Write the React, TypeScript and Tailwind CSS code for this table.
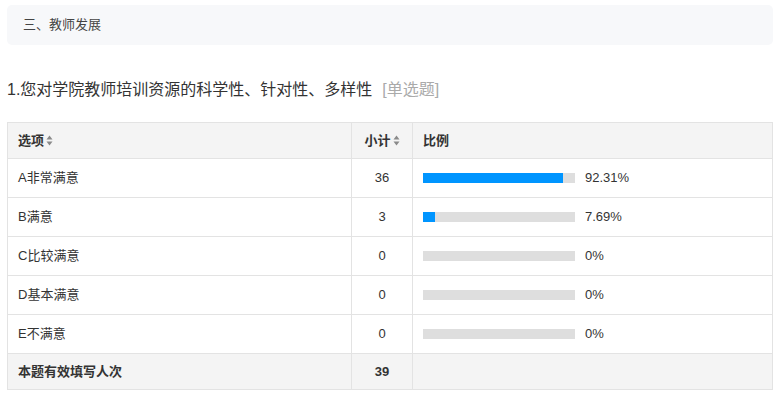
const rows = [
  { label: "A非常满意", count: 36, pct: 92.31 },
  { label: "B满意", count: 3, pct: 7.69 },
  { label: "C比较满意", count: 0, pct: 0 },
  { label: "D基本满意", count: 0, pct: 0 },
  { label: "E不满意", count: 0, pct: 0 },
];

function SortIcon() {
  return (
    <svg width="7" height="11" viewBox="0 0 7 11" className="ml-[2px] inline-block align-[-1px]">
      <path d="M3.5 0.5 L6.5 4.5 L0.5 4.5 Z" fill="#8a8a8a" />
      <path d="M3.5 10.5 L6.5 6.5 L0.5 6.5 Z" fill="#8a8a8a" />
    </svg>
  );
}

export default function App() {
  return (
    <div
      className="min-h-[393px] w-[779px] bg-white px-[7px] pt-[5px] text-[#333]"
      style={{ fontFamily: '"Liberation Sans", "Noto Sans CJK SC", sans-serif' }}
    >
      <div className="flex h-[40px] w-[766px] items-center rounded-[5px] bg-[#f7f8fa] pl-[16px] text-[13px] text-[#444]">
        三、教师发展
      </div>

      <div className="mt-[33px] h-[24px] text-[16px] leading-[24px]">
        1.您对学院教师培训资源的科学性、针对性、多样性
        <span className="ml-[10px] text-[#aaa]">[单选题]</span>
      </div>

      <table className="mt-[20px] w-[766px] table-fixed border-collapse text-[13px]">
        <colgroup>
          <col className="w-[344px]" />
          <col className="w-[61px]" />
          <col />
        </colgroup>
        <thead>
          <tr className="h-[36px] bg-[#f4f4f4] font-bold">
            <th className="border border-[#e3e3e3] pl-[10px] text-left">
              选项
              <SortIcon />
            </th>
            <th className="border border-[#e3e3e3] text-center">
              小计
              <SortIcon />
            </th>
            <th className="border border-[#e3e3e3] pl-[10px] text-left">比例</th>
          </tr>
        </thead>
        <tbody>
          {rows.map((r) => (
            <tr key={r.label} className="h-[39px]">
              <td className="border border-[#e3e3e3] pl-[10px]">{r.label}</td>
              <td className="border border-[#e3e3e3] text-center">{r.count}</td>
              <td className="border border-[#e3e3e3] pl-[10px]">
                <div className="flex items-center">
                  <div className="h-[10px] w-[152px] bg-[#dedede]">
                    <div className="h-full bg-[#0095ff]" style={{ width: `${r.pct}%` }} />
                  </div>
                  <span className="ml-[10px]">{r.pct}%</span>
                </div>
              </td>
            </tr>
          ))}
          <tr className="h-[36px] bg-[#f4f4f4] font-bold">
            <td className="border border-[#e3e3e3] pl-[10px]">本题有效填写人次</td>
            <td className="border border-[#e3e3e3] text-center">39</td>
            <td className="border border-[#e3e3e3]"></td>
          </tr>
        </tbody>
      </table>
    </div>
  );
}
